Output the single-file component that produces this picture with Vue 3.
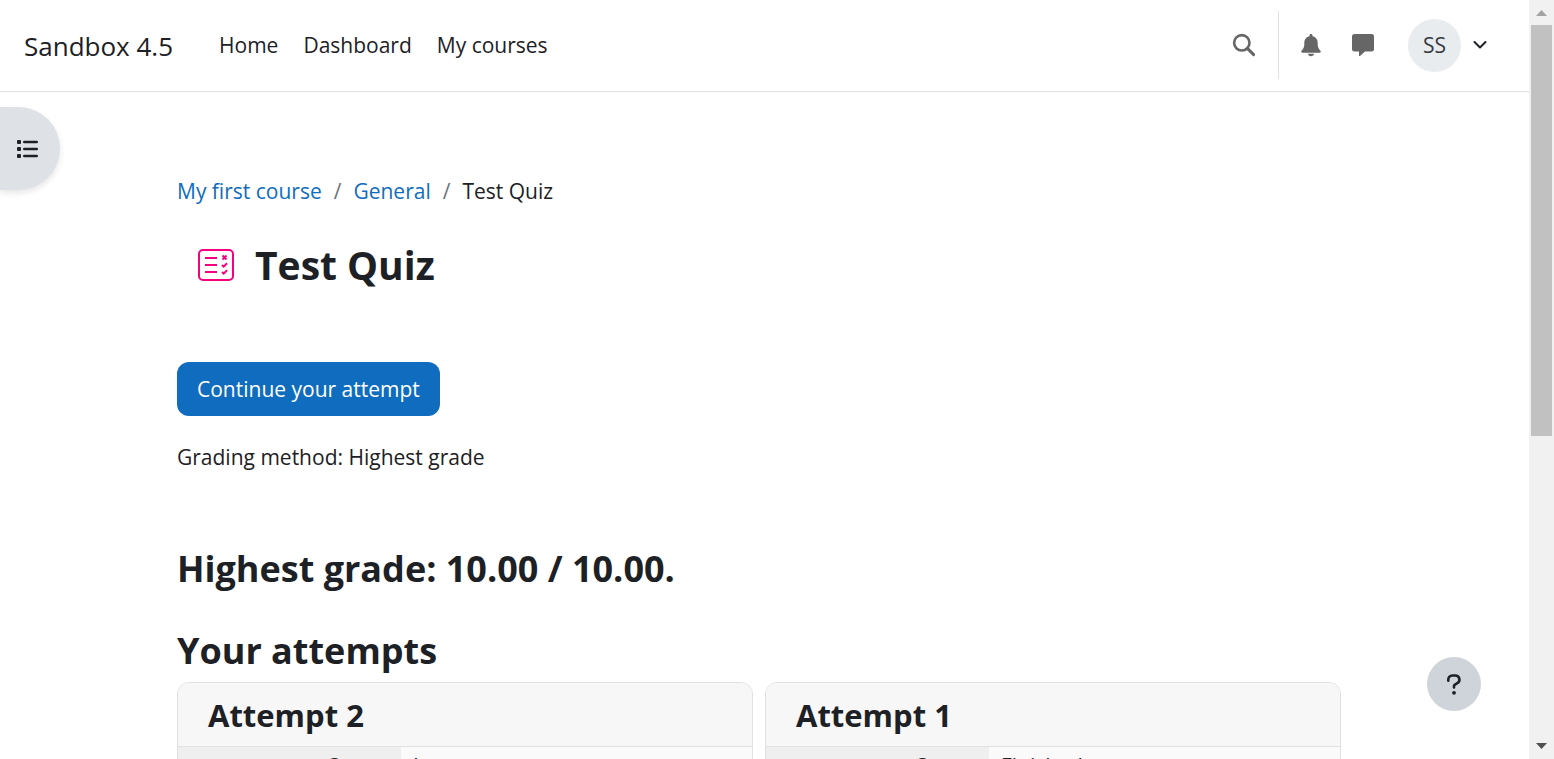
<script setup>
const navLinks = ['Home', 'Dashboard', 'My courses']
const attempts = [
  { title: 'Attempt 2', status: 'In progress' },
  { title: 'Attempt 1', status: 'Finished' }
]
</script>

<template>
  <div class="window">
    <div class="page">
      <header class="navbar">
        <a class="brand" href="#">Sandbox 4.5</a>
        <nav class="links" aria-label="Site navigation">
          <a v-for="link in navLinks" :key="link" href="#">{{ link }}</a>
        </nav>
        <div class="tools">
          <button class="tool search" type="button" aria-label="Search">
            <svg width="24" height="24" viewBox="0 0 24 24" fill="none" stroke="#666" stroke-linecap="round">
              <circle cx="9.8" cy="9.8" r="7.7" stroke-width="2.6" />
              <path d="M15.6 15.6 21.6 21.6" stroke-width="3" />
            </svg>
          </button>
          <button class="tool" type="button" aria-label="Notifications">
            <svg width="24" height="24" viewBox="0 0 24 24" fill="#666">
              <path d="M12 1c-.9 0-1.5.6-1.5 1.500v.7C7.400 3.900 5.300 6.500 5.300 9.700v1.600c0 2.300-.8 4.300-2.300 6-.7.800-.9 1.200-.7 1.700.2.500.6.700 1.200.7h17c.6 0 1-.2 1.200-.7.200-.5 0-.9-.7-1.700-1.500-1.700-2.300-3.700-2.300-6V9.700c0-3.200-2.100-5.800-5.200-6.500v-.7C13.500 1.600 12.900 1 12 1z" />
              <path d="M9 20.800h6c0 1.500-1.500 2.500-3 2.500s-3-1-3-2.500z" />
            </svg>
          </button>
          <button class="tool" type="button" aria-label="Messages">
            <svg width="24" height="24" viewBox="0 0 24 24" fill="#666">
              <path d="M3.500 1h17a2.500 2.500 0 0 1 2.500 2.500v12.500a2.500 2.500 0 0 1-2.500 2.500H14l-5 4.400c-.5.400-1 .2-1-.4v-4H3.500a2.500 2.500 0 0 1-2.500-2.500V3.500a2.500 2.500 0 0 1 2.500-2.500z" />
            </svg>
          </button>
          <button class="user" type="button" aria-label="User menu">
            <span class="avatar">SS</span>
            <svg width="14" height="10" viewBox="0 0 14 10" fill="none" stroke="#1d2125" stroke-width="2" stroke-linecap="round" stroke-linejoin="round">
              <path d="M1.500 2 7 7.500 12.500 2" />
            </svg>
          </button>
        </div>
      </header>

      <main class="content">
        <nav class="crumbs" aria-label="Breadcrumb">
          <a href="#">My first course</a>
          <span class="slash">/</span>
          <a href="#">General</a>
          <span class="slash">/</span>
          <span>Test Quiz</span>
        </nav>

        <div class="title">
          <svg width="38" height="34" viewBox="0 0 38 34" fill="none" stroke="#f7007f" stroke-width="2">
            <rect x="2" y="2" width="34" height="30" rx="4" />
            <path d="M8 10h12M8 17h12M8 24h12" />
            <path d="M25.500 7.500l4 4M29.500 7.500l-4 4M25 17l1.700 1.600 3.300-3.300M25 24l1.700 1.600 3.300-3.300" />
          </svg>
          <h1>Test Quiz</h1>
        </div>

        <button class="primary" type="button">Continue your attempt</button>
        <p class="method">Grading method: Highest grade</p>
        <h2 class="grade">Highest grade: 10.00 / 10.00.</h2>
        <h2 class="heading">Your attempts</h2>

        <div class="cards">
          <section v-for="attempt in attempts" :key="attempt.title" class="card">
            <h3>{{ attempt.title }}</h3>
            <table>
              <tbody>
                <tr>
                  <th scope="row">Status</th>
                  <td>{{ attempt.status }}</td>
                </tr>
              </tbody>
            </table>
          </section>
        </div>
      </main>

      <button class="drawer" type="button" aria-label="Open course index">
        <svg width="24" height="20" viewBox="0 0 24 20" fill="#1d2125">
          <rect x="1" y="1" width="4" height="4" rx="1" />
          <rect x="1" y="8" width="4" height="4" rx="1" />
          <rect x="1" y="15" width="4" height="4" rx="1" />
          <rect x="7" y="1.700" width="15" height="2.600" rx="1.300" />
          <rect x="7" y="8.700" width="15" height="2.600" rx="1.300" />
          <rect x="7" y="15.700" width="15" height="2.600" rx="1.300" />
        </svg>
      </button>
      <button class="help" type="button" aria-label="Help">
        <svg width="16" height="24" viewBox="0 0 16 24" fill="none" stroke="#1d2125" stroke-width="2.600" stroke-linecap="round" stroke-linejoin="round">
          <path d="M2.300 8.700V7.500a4 4 0 0 1 4-4h3a4.100 4.100 0 0 1 2 7.700L8.600 12.800Q8 13.200 8 14v1.500" />
          <circle cx="8" cy="20.800" r="1.900" fill="#1d2125" stroke="none" />
        </svg>
      </button>
    </div>

    <div class="scrollbar" aria-hidden="true">
      <svg width="11" height="6" viewBox="0 0 11 6"><path d="M0 6 5.500 0 11 6z" fill="#a3a3a3" /></svg>
      <div class="track"><div class="thumb"></div></div>
      <svg width="11" height="6" viewBox="0 0 11 6"><path d="M0 0 5.500 6 11 0z" fill="#505050" /></svg>
    </div>
  </div>
</template>

<style>
body {
  margin: 0;
  background: #fff;
}
</style>

<style scoped>
.window {
  display: flex;
  height: 100vh;
  overflow: hidden;
  color: #1d2125;
  font: 21px/34px "Open Sans", "Noto Sans", sans-serif;
}
.page {
  position: relative;
  flex: 1;
  min-width: 0;
  overflow: hidden;
}
a {
  color: #0f6cbf;
  text-decoration: none;
}
button {
  border: 0;
  padding: 0;
  font: inherit;
  color: inherit;
  background: none;
}
h1, h2, h3, p {
  margin: 0;
}
.navbar {
  display: flex;
  align-items: center;
  box-sizing: border-box;
  height: 92px;
  padding: 0 42px 0 24px;
  border-bottom: 1px solid #dee2e6;
}
.navbar a {
  color: #1d2125;
}
.brand {
  font-size: 26px;
  margin-right: 46px;
}
.links {
  display: flex;
  gap: 25px;
  padding-bottom: 2px;
}
.tools {
  display: flex;
  align-items: center;
  margin-left: auto;
  padding-bottom: 1px;
}
.tool {
  display: flex;
  align-items: center;
  justify-content: center;
  width: 52px;
  height: 68px;
}
.search {
  box-sizing: border-box;
  width: 69px;
  border-right: 1px solid #dee2e6;
  margin-right: 6px;
}
.user {
  display: flex;
  align-items: center;
  gap: 12px;
  margin-left: 19px;
}
.avatar {
  display: flex;
  align-items: center;
  justify-content: center;
  width: 53px;
  height: 53px;
  border-radius: 50%;
  color: #343a40;
  background: #e9ecef;
}
.content {
  padding: 82px 188px 0 177px;
}
.crumbs {
  display: flex;
  gap: 12px;
}
.slash {
  color: #6a737b;
}
.title {
  display: flex;
  align-items: center;
  gap: 20px;
  margin: 32px 0 72px 20px;
}
h1 {
  font-size: 39px;
  line-height: 50px;
}
.primary {
  height: 54px;
  padding: 0 20px;
  border-radius: 12px;
  color: #fff;
  background: #0f6cbf;
}
.method {
  margin-top: 24px;
}
h2 {
  font-size: 36px;
  line-height: 44px;
}
.grade {
  margin-top: 73px;
}
.heading {
  margin-top: 38px;
}
.cards {
  display: grid;
  grid-template-columns: 1fr 1fr;
  gap: 12px;
  margin-top: 9px;
}
.card {
  border: 1px solid #dee2e6;
  border-radius: 12px;
  overflow: hidden;
  background: #fafafa;
}
h3 {
  padding: 13px 30px 11px;
  border-bottom: 1px solid #dee2e6;
  font-size: 31px;
  line-height: 39px;
  background: #f7f7f7;
}
table {
  width: 100%;
  border-collapse: collapse;
}
th, td {
  padding: 2px 12px;
  text-align: left;
  font-weight: 400;
}
th {
  width: 199px;
  text-align: right;
  background: #efefef;
}
.drawer {
  position: absolute;
  left: 0;
  top: 107px;
  display: flex;
  align-items: center;
  width: 60px;
  height: 83px;
  padding-left: 16px;
  border-radius: 0 42px 42px 0;
  background: #dee2e6;
  box-shadow: 0 3px 6px rgba(0, 0, 0, 0.1);
}
.help {
  position: absolute;
  right: 48px;
  bottom: 48px;
  display: flex;
  align-items: center;
  justify-content: center;
  width: 54px;
  height: 54px;
  border-radius: 50%;
  background: #ced4da;
}
.scrollbar {
  display: flex;
  flex-direction: column;
  align-items: center;
  box-sizing: border-box;
  width: 25px;
  padding: 10px 2px;
  background: #f1f1f1;
}
.track {
  flex: 1;
  width: 100%;
  padding: 9px 0;
}
.thumb {
  height: 58%;
  background: #c1c1c1;
}
</style>
